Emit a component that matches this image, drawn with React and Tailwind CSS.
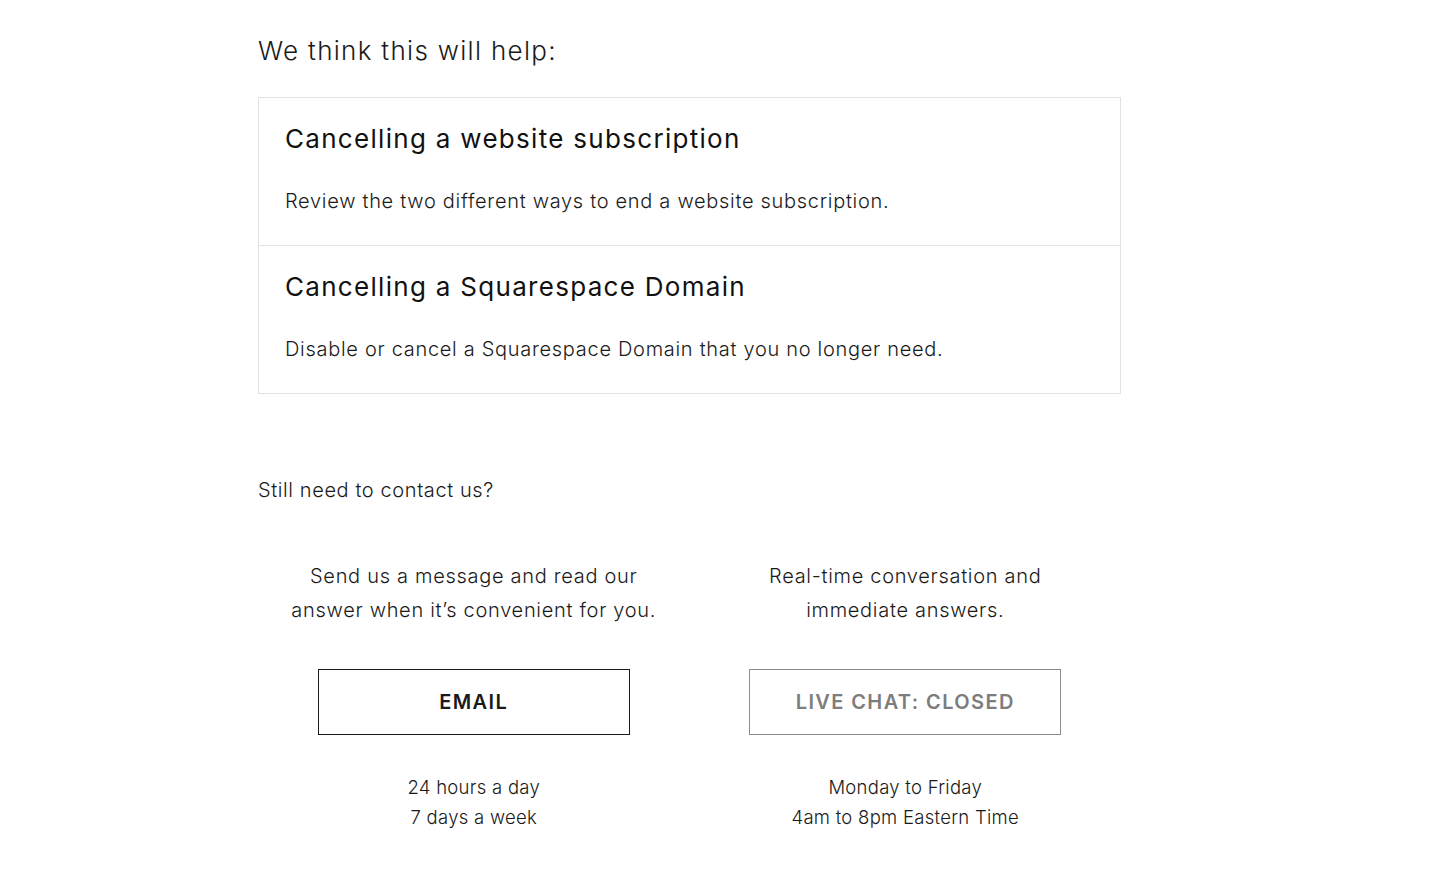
import React from 'react';

const articles = [
  {
    title: 'Cancelling a website subscription',
    body: 'Review the two different ways to end a website subscription.',
  },
  {
    title: 'Cancelling a Squarespace Domain',
    body: 'Disable or cancel a Squarespace Domain that you no longer need.',
  },
];

const ContactColumn = ({ lines, label, hours, disabled }) => (
  <div className="flex flex-col items-center text-center">
    <p className="text-[20px] leading-[34px] tracking-[0.035em] text-[#1a1a1a]">
      {lines[0]}
      <br />
      {lines[1]}
    </p>
    <button
      className={`mt-[42px] w-[312px] h-[66px] border text-[20px] font-semibold tracking-[0.07em] ${
        disabled ? 'border-[#8c8c8c] text-[#7d7d7d]' : 'border-[#1a1a1a] text-[#1a1a1a]'
      }`}
    >
      {label}
    </button>
    <p className="mt-[37px] text-[18.5px] leading-[30px] tracking-[0.015em] text-[#1a1a1a]">
      {hours[0]}
      <br />
      {hours[1]}
    </p>
  </div>
);

export default function App() {
  return (
    <div
      className="min-h-screen bg-white"
      style={{ fontFamily: 'Inter, "Open Sans", sans-serif' }}
    >
      <div className="w-[863px] ml-[258px] pt-[33px] font-light">
        <h2 className="text-[26px] leading-[36px] tracking-[0.05em] text-[#1a1a1a]">
          We think this will help:
        </h2>

        {/* Articles */}
        <div className="mt-[28px] border border-[#e2e2e2]">
          {articles.map((a, i) => (
            <div
              key={a.title}
              className={`px-[26px] pt-[24px] pb-[27px] ${i > 0 ? 'border-t border-[#e2e2e2]' : ''}`}
            >
              <h3 className="text-[26px] leading-[34px] font-normal tracking-[0.05em] text-[#111]">
                {a.title}
              </h3>
              <p className="mt-[28px] text-[20px] leading-[34px] tracking-[0.035em] text-[#1a1a1a]">
                {a.body}
              </p>
            </div>
          ))}
        </div>

        <p className="mt-[81px] text-[20px] leading-[30px] tracking-[0.03em] text-[#1a1a1a]">
          Still need to contact us?
        </p>

        <div className="mt-[54px] grid grid-cols-2">
          <ContactColumn
            lines={['Send us a message and read our', 'answer when it’s convenient for you.']}
            label="EMAIL"
            hours={['24 hours a day', '7 days a week']}
          />
          <ContactColumn
            lines={['Real-time conversation and', 'immediate answers.']}
            label="LIVE CHAT: CLOSED"
            hours={['Monday to Friday', '4am to 8pm Eastern Time']}
            disabled
          />
        </div>
      </div>
    </div>
  );
}
